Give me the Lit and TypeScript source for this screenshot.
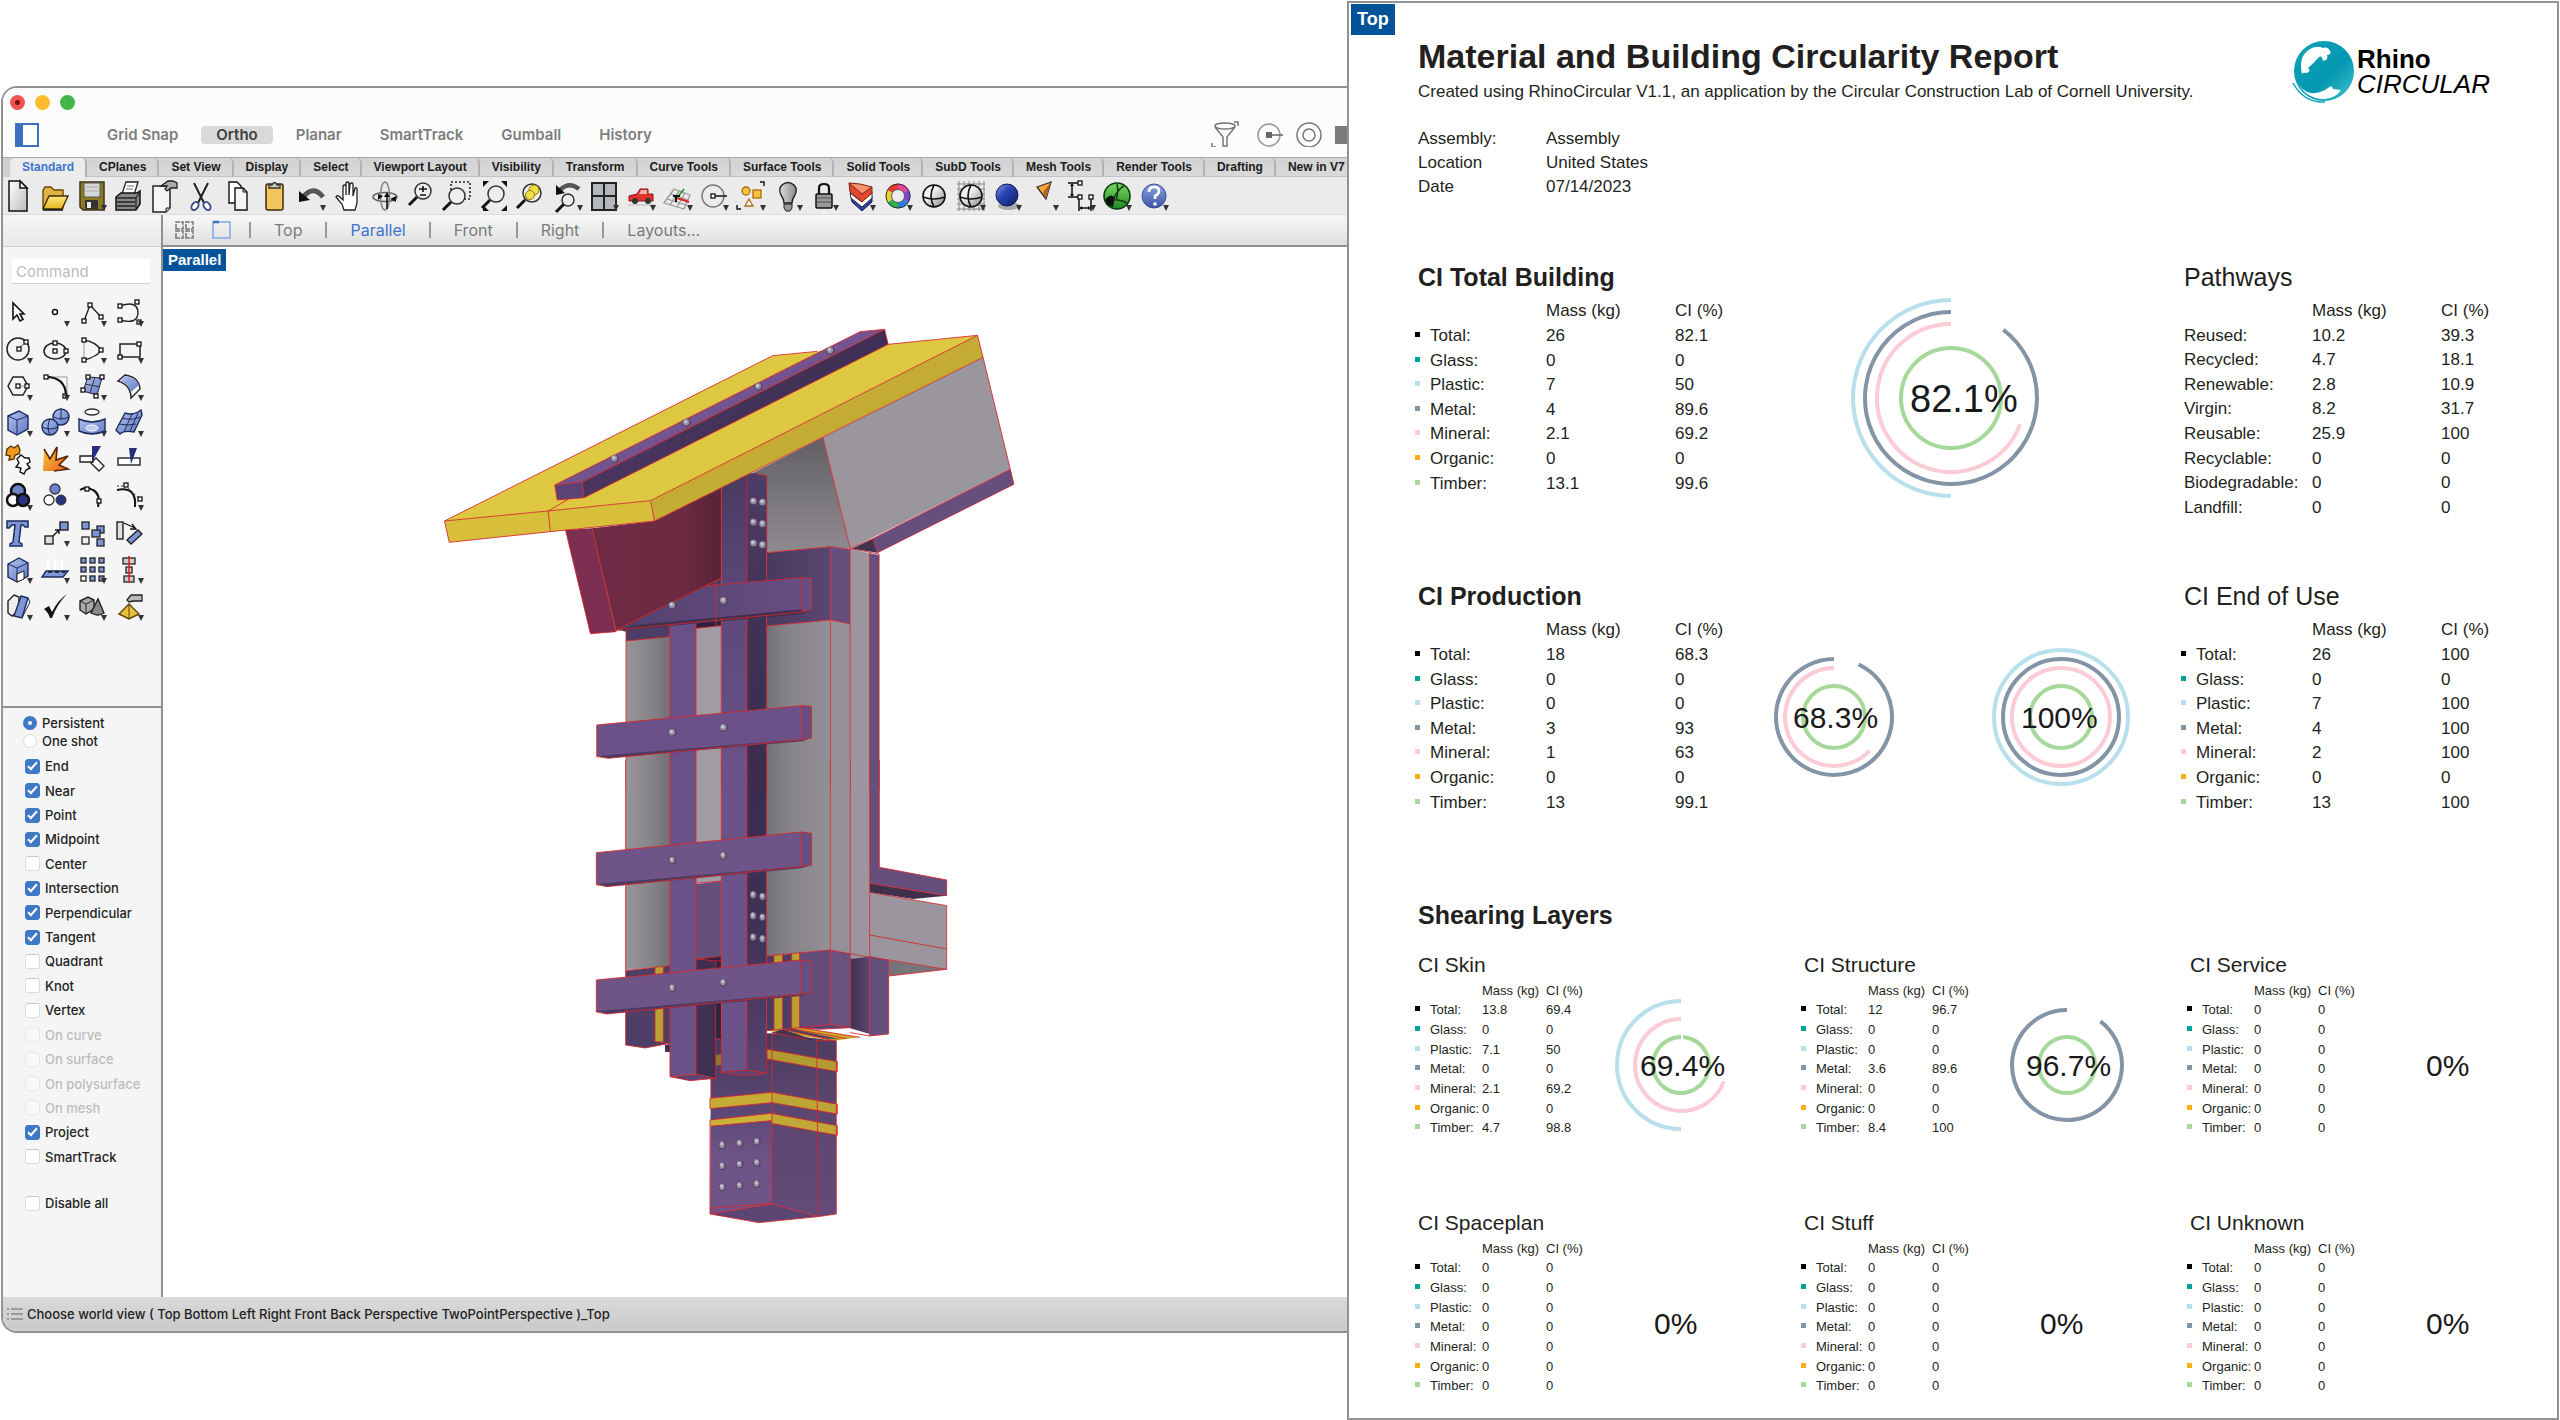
import { LitElement, html, svg, css, nothing } from "lit";
import { customElement, property, state } from "lit/decorators.js";
import { classMap } from "lit/directives/class-map.js";

type Frag = unknown;
interface Tool { name: string; art: Frag; menu?: boolean; }

const SANS = css`"Liberation Sans", Arial, sans-serif`;

/* Small square handle used by the curve icons. */
const dot = (x: number, y: number) =>
  svg`<rect x=${x - 2} y=${y - 2} width="4" height="4" fill="#fff" stroke="#111" stroke-width="1.3"/>`;
const lens = (cx: number, cy: number, r: number) => svg`
  <path d="M${cx - r + 2} ${cy + r - 2}L${cx - r - 6} ${cy + r + 6}" stroke="#111" stroke-width="3"/>
  <circle cx=${cx} cy=${cy} r=${r} fill="#eee" stroke="#333" stroke-width="1.5"/>`;

const TOP_TOOLS: Tool[] = [
  { name: "New", art: svg`<path d="M9 3H20L27 10V33H9Z" fill="url(#paper)" stroke="#111" stroke-width="1.5"/><path d="M20 3V10H27Z" fill="#fff" stroke="#111" stroke-width="1.5"/>` },
  { name: "Open", art: svg`<path d="M6 30V12L8 9H14L17 12H26V30Z" fill="#e0b440" stroke="#6b4a08" stroke-width="1.4"/><path d="M6 31L12 18H31L25 31Z" fill="url(#gold)" stroke="#3d2c08" stroke-width="1.4"/><path d="M6 32H26" stroke="#111" stroke-width="1.4"/>` },
  { name: "Save", menu: true, art: svg`<path d="M6 4H30V32H9L6 29Z" fill="#8a7a26" stroke="#3a3510" stroke-width="1.5"/><rect x="10" y="5" width="16" height="14" fill="#d6d6d6" stroke="#555"/><path d="M12 9H24M12 13H24" stroke="#aaa"/><rect x="11" y="22" width="13" height="9" fill="#333"/><rect x="13" y="24" width="4" height="6" fill="#e8e8e8"/>` },
  { name: "Print", art: svg`<path d="M12 16L16 4H28L24 17Z" fill="#fff" stroke="#222" stroke-width="1.3"/><path d="M17 8H24M16 11H23" stroke="#777"/><path d="M6 19L11 15H27L30 13V26L26 32H6Z" fill="#888" stroke="#111" stroke-width="1.5"/><path d="M6 20H26V32M26 20L30 14M7 24H25M7 28H25" stroke="#222" stroke-width="1.3" fill="none"/>` },
  { name: "Document properties", art: svg`<path d="M6 8H23V30L19 34H6Z" fill="#f5f5f5" stroke="#222" stroke-width="1.5"/><path d="M14 8L21 3H26L30 5V10H24L20 13L18 11L20 8Z" fill="#aaa" stroke="#222" stroke-width="1.3"/><path d="M23 30H19V34" fill="#bbb" stroke="#222"/>` },
  { name: "Cut", art: svg`<path d="M11 5L21 25M25 5L15 25" stroke="#222" stroke-width="2"/><ellipse cx="12" cy="28" rx="3" ry="4.500" transform="rotate(35 12 28)" fill="#fff" stroke="#3c4f8c" stroke-width="2"/><ellipse cx="24" cy="28" rx="3" ry="4.500" transform="rotate(-35 24 28)" fill="#fff" stroke="#3c4f8c" stroke-width="2"/>` },
  { name: "Copy", art: svg`<path d="M9 4H17L21 8V25H9Z" fill="#fff" stroke="#111" stroke-width="1.4"/><path d="M15 10H23L27 14V32H15Z" fill="#f4f4f4" stroke="#111" stroke-width="1.4"/><path d="M23 10V14H27" fill="none" stroke="#111"/>` },
  { name: "Paste", art: svg`<rect x="9" y="6" width="17" height="26" rx="2" fill="#f2c65c" stroke="#3a2a08" stroke-width="1.5"/><path d="M12 10V7H15Q17.500 2 20 7H23V10Z" fill="#ccc" stroke="#333" stroke-width="1.3"/>` },
  { name: "Undo", menu: true, art: svg`<path d="M11 18Q21 7 30 19" fill="none" stroke="#555" stroke-width="5"/><path d="M6 13V24L17 22Z" fill="#111"/>` },
  { name: "Pan", art: svg`<path d="M14 32L12 26L6 19Q7 16 11 20L13 22V8Q14.500 6 16 8V17V5Q17.500 3 19 5V17L20 6Q22 4 23 6V18L25 10Q27 9 27 11V25L25 32Z" fill="#fff" stroke="#222" stroke-width="1.3"/>` },
  { name: "Rotate view", art: svg`<ellipse cx="18" cy="19" rx="12" ry="4.500" fill="none" stroke="#666" stroke-width="1.6"/><ellipse cx="18" cy="18" rx="4.500" ry="14" fill="none" stroke="#888" stroke-width="1.6"/><path d="M20 14L23 19H17ZM11 16L16 18L11 22Z M23 21L29 18V24Z" fill="#111"/><path d="M20 18V31" stroke="#111" stroke-width="1.6"/>` },
  { name: "Zoom dynamic", art: svg`${lens(20, 13, 8)}<path d="M16 11H24M20 8V14M17 17H23" stroke="#111" stroke-width="1.6"/>` },
  { name: "Zoom window", art: svg`<rect x="11" y="4" width="19" height="17" fill="none" stroke="#222" stroke-width="1.6" stroke-dasharray="2 2"/>${lens(17, 18, 8)}` },
  { name: "Zoom extents", art: svg`${lens(19, 16, 8)}<path d="M6 3H12L6 9ZM30 3V9L24 3ZM30 33H24L30 27ZM6 33V27L12 33Z" fill="#111"/>` },
  { name: "Zoom selected", art: svg`${lens(19, 15, 9)}<circle cx="21" cy="12" r="5" fill="#f4de45" stroke="#8a7a10"/><circle cx="17" cy="17" r="4.500" fill="#f4de45" stroke="#8a7a10"/>` },
  { name: "Undo view change", menu: true, art: svg`<path d="M10 12Q19 3 29 11" fill="none" stroke="#555" stroke-width="4.500"/><path d="M6 7V17L15 15Z" fill="#111"/>${lens(18, 22, 6)}` },
  { name: "Viewports", menu: true, art: svg`<rect x="6" y="5" width="24" height="27" fill="#b4b7bb" stroke="#222" stroke-width="2"/><path d="M18 5V32M6 18H30" stroke="#222" stroke-width="2"/>` },
  { name: "Move vehicle", menu: true, art: svg`<path d="M6 23V18L14 16L17 11H25V16H30V23Z" fill="#e0332c" stroke="#8c1512"/><path d="M18 12H24V16H16Z" fill="#fff" opacity=".6"/><circle cx="12" cy="23" r="3" fill="#333"/><circle cx="25" cy="23" r="3" fill="#333"/><path d="M5 27H31" stroke="#bbb"/>` },
  { name: "CPlane", menu: true, art: svg`<path d="M4 25L14 11L30 17L24 31ZM7 21L26 27M11 16L28 22M10 27L19 13M17 29L25 15" fill="none" stroke="#999" stroke-width="1.3"/><path d="M17 20L29 24" stroke="#d22" stroke-width="2"/><path d="M17 20L24 11" stroke="#2b9e3c" stroke-width="2"/><path d="M13 18H20M16 18V24" stroke="#111" stroke-width="2"/>` },
  { name: "Object snap", menu: true, art: svg`<circle cx="17" cy="18" r="11" fill="none" stroke="#777" stroke-width="1.4"/><path d="M17 18H31" stroke="#111" stroke-width="1.5"/>${dot(17, 18)}` },
  { name: "Select", menu: true, art: svg`<circle cx="13" cy="13" r="4" fill="#fbc23a" stroke="#b06b10" stroke-width="1.3"/><rect x="20" y="12" width="8" height="8" fill="#fbc23a" stroke="#b06b10" stroke-width="1.3"/><path d="M16 21L20 28H12Z" fill="#fff" stroke="#b06b10" stroke-width="1.3"/><path d="M27 4H31V8M4 27V31H8" fill="none" stroke="#111" stroke-width="1.4"/>` },
  { name: "Hide", menu: true, art: svg`<path d="M14 25Q14 21 11 17Q8 11 12 7Q18 2 24 7Q28 11 25 17Q22 21 22 25Z" fill="url(#bulb)" stroke="#222" stroke-width="1.4"/><path d="M14 26H22V30L20 33H16L14 30Z" fill="#999" stroke="#222"/>` },
  { name: "Lock", menu: true, art: svg`<path d="M13 17V10Q13 6 18 6Q23 6 23 10V17" fill="none" stroke="#111" stroke-width="2.200"/><rect x="10" y="16" width="16" height="14" rx="1" fill="#999" stroke="#111" stroke-width="1.5"/><path d="M11 20H25M11 24H25" stroke="#555"/>` },
  { name: "Layers", menu: true, art: svg`<path d="M8 20L9 24L19 33L29 24V19L19 28Z" fill="#2b3f9c" stroke="#15205c"/><path d="M7 15L8 20L19 29L29 20V14L19 24Z" fill="#fff" stroke="#333"/><path d="M6 5L7 14L19 24L29 15V9L19 15Z" fill="#e3472e" stroke="#7c1f12"/><path d="M6 5L17 6L29 9L19 16Z" fill="#f4946e" stroke="#7c1f12"/>` },
  { name: "Object colors", menu: true, art: svg`<g fill="none" stroke-width="6"><path d="M18 8.500A9.500 9.500 0 0 1 26.200 13.200" stroke="#e9409c"/><path d="M26.200 13.200A9.500 9.500 0 0 1 26.200 22.800" stroke="#7a45d8"/><path d="M26.200 22.800A9.500 9.500 0 0 1 18 27.500" stroke="#2f7be0"/><path d="M18 27.500A9.500 9.500 0 0 1 9.800 22.800" stroke="#2fb14a"/><path d="M9.800 22.800A9.500 9.500 0 0 1 9.800 13.200" stroke="#e8d530"/><path d="M9.800 13.200A9.500 9.500 0 0 1 18 8.500" stroke="#e8392f"/></g><circle cx="18" cy="18" r="12" fill="none" stroke="#333"/><circle cx="18" cy="18" r="6.500" fill="#eee" stroke="#555"/>` },
  { name: "Wireframe", art: svg`<circle cx="18" cy="18" r="11" fill="url(#ball)" stroke="#111" stroke-width="1.6"/><path d="M7 19Q18 23 29 19M18 7Q12 18 18 29" fill="none" stroke="#111" stroke-width="1.6"/>` },
  { name: "Shaded", menu: true, art: svg`<path d="M4 6H32M4 11H32M4 16H32M4 21H32M4 26H32M4 31H32M6 3V33M11 3V33M16 3V33M21 3V33M26 3V33M31 3V33" stroke="#888" stroke-width="1"/><circle cx="18" cy="18" r="11" fill="url(#ball)" stroke="#111" stroke-width="1.6"/><path d="M7 19Q18 23 29 19M18 7Q12 18 18 29" fill="none" stroke="#111" stroke-width="1.6"/>` },
  { name: "Rendered", menu: true, art: svg`<ellipse cx="20" cy="28" rx="11" ry="4" fill="#aaa"/><circle cx="18" cy="17" r="11" fill="url(#blueball)" stroke="#111a4c"/>` },
  { name: "Spotlight", menu: true, art: svg`<path d="M11 9L25 4L20 21Z" fill="#f3a73c" stroke="#333" stroke-width="1.3"/><path d="M25 4L20 21L17 14Z" fill="#b5651a"/>` },
  { name: "Dimensions", menu: true, art: svg`<path d="M5 5H16M5 19H16M9 6V18M16 19V33M28 19V33M17 30H27" stroke="#111" stroke-width="1.5"/><path d="M7 8L9 5L11 8ZM7 16L9 19L11 16ZM19 28L16 30L19 32ZM25 28L28 30L25 32Z" fill="#111"/>${dot(17, 5)}${dot(17, 19)}${dot(28, 19)}` },
  { name: "Grasshopper", menu: true, art: svg`<circle cx="18" cy="18" r="13" fill="url(#green)" stroke="#0c3c10" stroke-width="1.6"/><path d="M6 22Q12 14 16 20L14 29L9 27Z" fill="#111"/><path d="M15 20Q20 10 25 8M18 6Q20 14 17 22Q24 22 29 26" fill="none" stroke="#123c12" stroke-width="1.5"/>` },
  { name: "Help", menu: true, art: svg`<circle cx="18" cy="18" r="12" fill="url(#help)" stroke="#3b4f96"/><path d="M13 14Q13 9 18 9Q23 9 23 13Q23 16 19 18V21" fill="none" stroke="#fff" stroke-width="2.600"/><circle cx="19" cy="26" r="1.800" fill="#fff"/>` },
];

const SIDE_TOOLS: Tool[] = [
  { name: "Pointer", art: svg`<path d="M13 9V25L17 21L20 27L23 25.500L20 20H24Z" fill="#fff" stroke="#111" stroke-width="1.6"/>` },
  { name: "Point", menu: true, art: svg`<circle cx="18" cy="18" r="2.500" fill="#fff" stroke="#111" stroke-width="1.4"/>` },
  { name: "Polyline", menu: true, art: svg`<path d="M10 27L16 11L27 23" fill="none" stroke="#222" stroke-width="1.4"/>${dot(10, 27)}${dot(16, 11)}${dot(27, 23)}` },
  { name: "Curve", menu: true, art: svg`<path d="M9 12Q26 6 27 18Q27 31 9 26" fill="none" stroke="#222" stroke-width="1.4"/>${dot(9, 12)}${dot(26, 8)}${dot(9, 26)}${dot(28, 28)}` },
  { name: "Circle", menu: true, art: svg`<circle cx="18" cy="18" r="11" fill="none" stroke="#222" stroke-width="1.5"/><path d="M18 18L26 11" stroke="#555"/>${dot(19, 18)}${dot(26, 11)}` },
  { name: "Ellipse", menu: true, art: svg`<ellipse cx="18" cy="20" rx="11" ry="8" fill="none" stroke="#222" stroke-width="1.5"/>${dot(18, 12)}${dot(18, 20)}${dot(29, 20)}` },
  { name: "Arc", menu: true, art: svg`<path d="M10 9Q22 11 27 19Q23 26 10 29" fill="none" stroke="#222" stroke-width="1.5"/><path d="M10 9V29" stroke="#999"/>${dot(10, 9)}${dot(27, 19)}${dot(10, 29)}` },
  { name: "Rectangle", menu: true, art: svg`<rect x="9" y="13" width="20" height="13" fill="none" stroke="#222" stroke-width="1.5"/>${dot(9, 26)}${dot(28, 13)}` },
  { name: "Polygon", menu: true, art: svg`<path d="M8 18L13 9H23L28 18L23 27H13Z" fill="none" stroke="#222" stroke-width="1.5"/><path d="M19 18H27" stroke="#999"/>${dot(18, 18)}${dot(27, 18)}` },
  { name: "Fillet", menu: true, art: svg`<path d="M9 9H30V28" fill="none" stroke="#999"/><path d="M9 9Q28 9 29 27" fill="none" stroke="#111" stroke-width="2.200"/>${dot(9, 9)}${dot(28, 28)}` },
  { name: "Surface from points", menu: true, art: svg`<path d="M14 9L28 10L23 27L9 23Z" fill="url(#steel)" stroke="#223"/><path d="M21 9L16 25M11 16L26 19" stroke="#334" />${dot(14, 9)}${dot(28, 9)}${dot(9, 22)}${dot(22, 28)}` },
  { name: "Surface from curves", menu: true, art: svg`<path d="M7 13L14 7Q28 9 29 21L20 30Q20 17 7 13Z" fill="#fff" stroke="#222" stroke-width="1.4"/><path d="M14 8Q24 9 28 17L20 24Q17 16 9 13Z" fill="url(#steel)"/>` },
  { name: "Box", menu: true, art: svg`<path d="M8 12L19 7L28 12V25L17 31L8 26Z" fill="url(#steel)" stroke="#1c2b5c" stroke-width="1.4"/><path d="M8 12L17 16L28 12M17 16V31" fill="none" stroke="#1c2b5c"/>` },
  { name: "Boolean spheres", menu: true, art: svg`<circle cx="24" cy="13" r="8" fill="url(#steel)" stroke="#1c2b5c" stroke-width="1.4"/><circle cx="13" cy="23" r="8" fill="url(#steel)" stroke="#1c2b5c" stroke-width="1.4"/><path d="M5 23Q13 27 21 23M13 15Q9 23 13 31M17 13Q24 17 32 13M24 5V16" fill="none" stroke="#1c2b5c"/>` },
  { name: "Loft", menu: true, art: svg`<ellipse cx="18" cy="8" rx="7" ry="3" fill="#fff" stroke="#333" stroke-width="1.4"/><path d="M5 15Q18 21 31 15V27Q18 33 5 27Z" fill="url(#steel)" stroke="#1c2b5c" stroke-width="1.4"/><ellipse cx="18" cy="24" rx="6" ry="3" fill="#c3cdf0" stroke="#fff"/>` },
  { name: "Mesh surface", menu: true, art: svg`<path d="M5 26L14 9Q22 12 30 6L31 11L23 28Q13 26 9 30Z" fill="url(#steel)" stroke="#1c2b5c" stroke-width="1.4"/><path d="M11 14Q20 17 29 13M8 20Q17 22 25 20M21 10L13 28M27 9L19 27" fill="none" stroke="#1c2b5c"/>` },
  { name: "Join", art: svg`<path d="M7 8L11 5L14 7L18 4L20 9L19 13L15 14L14 18L9 19L10 15L6 14Z" fill="#f09a20" stroke="#5a3606" stroke-width="1.4"/><path d="M17 18L21 14L25 17L29 17L30 21L27 23L30 27L26 29L24 33L20 31L21 27L16 26L19 22Z" fill="#fff" stroke="#111" stroke-width="1.4"/>` },
  { name: "Explode", art: svg`<path d="M6 30L7 8L13 17L21 6L20 18L31 15L22 24L31 27L16 30Z" fill="url(#fire)"/><path d="M7 8L13 18L20 6L19 19L31 15L22 24L31 28L17 30" fill="none" stroke="#5a2405" stroke-width="1.6"/>` },
  { name: "Trim", art: svg`<path d="M6 15H19V21H6ZM22 17L30 25L25 30L17 22Z" fill="#fff" stroke="#222" stroke-width="1.4"/><path d="M18 5H27L18 21Z" fill="#232f7a"/>` },
  { name: "Split", art: svg`<rect x="7" y="17" width="22" height="7" fill="#fff" stroke="#222" stroke-width="1.4"/><path d="M18 7H26L20 23Z" fill="#232f7a"/>` },
  { name: "Group", menu: true, art: svg`<circle cx="18" cy="13" r="7" fill="#6f83c8" stroke="#111" stroke-width="2.500"/><circle cx="13" cy="22" r="6" fill="#fff" stroke="#111" stroke-width="2.500"/><circle cx="23" cy="22" r="6" fill="#27337c" stroke="#111" stroke-width="2.500"/>` },
  { name: "Ungroup", art: svg`<circle cx="18" cy="11" r="5" fill="#6f83c8" stroke="#334" stroke-width="1.3"/><circle cx="12" cy="22" r="5" fill="#fff" stroke="#333" stroke-width="1.3"/><circle cx="24" cy="22" r="5" fill="#27337c" stroke="#334"/>` },
  { name: "Edit points", art: svg`<path d="M6 12Q12 8 19 12Q27 16 24 29" fill="none" stroke="#111" stroke-width="2"/>${dot(13, 11)}${dot(25, 23)}` },
  { name: "Control points", menu: true, art: svg`<path d="M6 12Q26 8 24 29" fill="none" stroke="#111" stroke-width="2"/><path d="M6 8H15L30 22" fill="none" stroke="#333" stroke-dasharray="2 2"/>${dot(15, 7)}${dot(29, 21)}` },
  { name: "Text", art: svg`<path d="M7 7H28V13H25L23 11H21L19 28L22 30V32H10V30L13 28L15 11H12L9 14H7Z" fill="#7d94d6" stroke="#1c2b5c" stroke-width="1.5"/>` },
  { name: "Move", menu: true, art: svg`<rect x="8" y="22" width="8" height="8" fill="#ddd" stroke="#222" stroke-width="1.4"/><rect x="23" y="8" width="8" height="8" fill="#7d94d6" stroke="#222" stroke-width="1.4"/><path d="M16 22L22 16M18 16H22V20" stroke="#111" stroke-width="1.4" fill="none"/>` },
  { name: "Copy objects", art: svg`<rect x="8" y="8" width="7" height="7" fill="#7d94d6" stroke="#222" stroke-width="1.3"/><rect x="8" y="23" width="7" height="7" fill="#eee" stroke="#222" stroke-width="1.3"/><rect x="23" y="12" width="7" height="7" fill="#7d94d6" stroke="#222" stroke-width="1.3"/><rect x="18" y="16" width="8" height="7" fill="#7d94d6" stroke="#222" stroke-width="1.3"/><rect x="23" y="25" width="7" height="7" fill="#7d94d6" stroke="#222" stroke-width="1.3"/>` },
  { name: "Rotate", art: svg`<rect x="6" y="8" width="6" height="17" fill="#ddd" stroke="#222" stroke-width="1.4"/><path d="M16 26L27 16L31 20L20 30Z" fill="#7d94d6" stroke="#222" stroke-width="1.4"/><path d="M13 9L24 14M21 10L25 15L19 15" fill="none" stroke="#111" stroke-width="1.3"/>` },
  { name: "Scale", menu: true, art: svg`<path d="M8 13L19 7L28 12V25L17 31L8 26Z" fill="url(#steel)" stroke="#1c2b5c" stroke-width="1.4"/><path d="M8 13L17 17L28 12M17 17V31" fill="none" stroke="#1c2b5c"/><path d="M17 23L24 20V28L17 31Z" fill="#fff" stroke="#222"/>` },
  { name: "Project to plane", menu: true, art: svg`<path d="M9 20H31L26 26H5Z" fill="#7d94d6" stroke="#1c2b5c" stroke-width="1.4"/><path d="M11 8V19M18 8V19M25 8V19" stroke="#fff" stroke-width="2"/><path d="M11 21H15M18 21H22M25 21H28" stroke="#111" stroke-width="1.6"/>` },
  { name: "Array", menu: true, art: svg`${[7, 16, 25].map((y) => [7, 16, 25].map((x) => svg`<rect x=${x} y=${y} width="5" height="5" fill=${x === 7 && y === 25 ? "#fff" : "#7d94d6"} stroke="#222" stroke-width="1.3"/>`))}` },
  { name: "Align", menu: true, art: svg`<rect x="12" y="7" width="12" height="6" fill="#ccc" stroke="#222" stroke-width="1.3"/><rect x="15" y="16" width="6" height="6" fill="#ccc" stroke="#222" stroke-width="1.3"/><rect x="13" y="25" width="10" height="6" fill="#ccc" stroke="#222" stroke-width="1.3"/><path d="M18 5V32" stroke="#e01f1f" stroke-width="1.5"/>` },
  { name: "Sheet bend", menu: true, art: svg`<path d="M8 13L14 7L19 9V22L12 28L8 25Z" fill="#eee" stroke="#222" stroke-width="1.4"/><path d="M21 8L28 10L22 30L14 28Z" fill="#7d94d6" stroke="#1c2b5c" stroke-width="1.4"/><path d="M28 10L30 14L22 30" fill="none" stroke="#1c2b5c"/>` },
  { name: "Check", menu: true, art: svg`<path d="M7 21L12 18L15 24Q21 12 30 6Q20 16 15 30H13Q11 24 7 21Z" fill="#111"/>` },
  { name: "Solids", menu: true, art: svg`<path d="M6 13L14 9L20 12V21L12 26L6 22Z" fill="#aaa" stroke="#222" stroke-width="1.4"/><path d="M6 13L12 16L20 12M12 16V26" fill="none" stroke="#222"/><path d="M24 11L30 25Q24 29 17 25Z" fill="#888" stroke="#222" stroke-width="1.4"/>` },
  { name: "Pyramid", menu: true, art: svg`<path d="M18 16L28 26L18 31L8 26Z" fill="#e8c03c" stroke="#5a4408" stroke-width="1.4"/><path d="M18 16V31" stroke="#5a4408"/><path d="M16 12L20 7H31V13H22L18 14Z" fill="#bbb" stroke="#222" stroke-width="1.3"/>` },
];

const TABS = ["Standard", "CPlanes", "Set View", "Display", "Select", "Viewport Layout", "Visibility", "Transform", "Curve Tools", "Surface Tools", "Solid Tools", "SubD Tools", "Mesh Tools", "Render Tools", "Drafting", "New in V7"];
const MODES = ["Grid Snap", "Ortho", "Planar", "SmartTrack", "Gumball", "History"];
const VIEWS = ["Top", "Parallel", "Front", "Right", "Layouts..."];
const SNAPS: [string, boolean, boolean?][] = [
  ["End", true], ["Near", true], ["Point", true], ["Midpoint", true], ["Center", false],
  ["Intersection", true], ["Perpendicular", true], ["Tangent", true], ["Quadrant", false],
  ["Knot", false], ["Vertex", false], ["On curve", false, true], ["On surface", false, true],
  ["On polysurface", false, true], ["On mesh", false, true], ["Project", true], ["SmartTrack", false],
];

type Shape = [fill: string, points: string];
const face = ([fill, points]: Shape) => svg`<polygon points=${points} fill=${fill}/>`;
const edge = (points: string) => svg`<polyline points=${points}/>`;
const screw = ([x, y]: number[]) => svg`<ellipse cx=${x} cy=${y} rx="11" ry="12" fill="#54405f"/><ellipse cx=${x - 1} cy=${y - 1} rx="8" ry="10" fill="#948ca4"/><ellipse cx=${x - 2} cy=${y - 3} rx="4" ry="5" fill="#c9c6d8"/>`;

/* Upper half of the assembly: roof, chimney box and the first two battens. */
const UPPER: Shape[] = [
  ["url(#shadeUp)", "840,490 1019,382 1088,716 1038,710 877,728"],
  ["#9b969d", "1019,382 1424,142 1493,478 1088,716"],
  ["#664f7c", "1145,686 1493,478 1502,523 1157,728"],
  ["#43334f", "1092,716 1145,686 1157,728"],
  ["#3c2d4e", "500,958 700,925 762,910 762,960 521,965"],
  ["url(#wallL)", "521,962 632,950 632,1440 521,1440"],
  ["#4e3d66", "521,955 632,940 632,980 521,993"],
  ["#a19ba3", "698,950 762,945 762,1440 698,1440"],
  ["#2f213c", "698,935 762,925 762,947 698,955"],
  ["url(#wallR)", "877,948 1038,930 1038,1440 877,1440"],
  ["url(#recess)", "877,728 1038,710 1038,930 877,948"],
  ["#664f7c", "1038,710 1088,718 1088,942 1038,930"],
  ["#959097", "1038,930 1088,942 1088,1440 1038,1440"],
  ["#9b969d", "1088,716 1137,730 1137,1440 1088,1440"],
  ["#664f7c", "1137,730 1161,735 1161,1440 1137,1440"],
  ["url(#post)", "762,533 827,490 827,1440 762,1440"],
  ["url(#postSide)", "827,490 850,490 877,497 877,1440 827,1440"],
  ["#6b5088", "632,935 698,930 698,1440 632,1440"],
  ["#4b3b61", "700,840 762,805 762,830 700,850"],
  ["url(#bar)", "496,960 720,828 965,803 990,806 990,900 966,906 540,950"],
  ["#3f3050", "496,962 540,946 966,898 990,900 966,912 520,960"],
  ["#664f80", "965,803 990,806 990,900 966,906"],
  ["#7c2f50", "368,660 435,655 496,965 431,971"],
  ["url(#wine)", "435,655 593,633 762,533 762,805 496,962"],
  ["#6c5188", "447,1245 965,1187 966,1289 476,1338 447,1340"],
  ["#664f80", "965,1187 990,1189 990,1284 966,1289"],
  ["#4c3a62", "447,1338 966,1288 990,1284 966,1294 476,1345"],
  ["#dec741", "62,633 892,137 1010,124 1410,76 583,572 324,603"],
  ["#d7be3b", "62,633 324,603 583,572 593,633 330,665 74,697"],
  ["#c3ab34", "583,572 1410,76 1424,142 593,633"],
  ["#73548f", "341,525 1113,65 1175,58 410,516"],
  ["#5b4376", "341,525 410,516 415,563 347,570"],
  ["url(#beam)", "410,516 1175,58 1184,103 415,563"],
];
const UPPER_EDGES = [
  "62,633 892,137 1005,124", "1184,103 1410,76 1424,142 593,633 330,665 74,697 62,633 324,603 583,572 1410,76",
  "583,572 593,633", "324,603 330,665", "324,603 375,568",
  "341,525 1113,65 1175,58 1184,103 415,563 347,570 341,525 410,516 1175,58", "410,516 415,563",
  "368,660 431,971 496,965 435,655", "496,960 720,828 762,805", "762,533 762,815", "827,495 827,815", "850,492 877,497 877,812",
  "1019,382 1088,716", "1424,142 1493,478 1502,523 1157,728 1145,686 1493,478", "1088,716 1145,686", "1088,716 1161,732 1161,1440",
  "877,728 1038,710 1088,718 1088,1440", "877,948 1038,930 1088,942", "1038,710 1038,1440", "1137,728 1137,1440",
  "720,828 965,803 990,806 990,900 966,906 496,960", "965,803 966,906",
  "521,960 521,1240", "521,993 632,980", "632,940 632,1224", "698,936 698,1216", "748,812 748,948", "762,925 762,1208", "827,920 827,1200", "877,915 877,1195", "698,955 762,947",
  "447,1340 447,1245 965,1187 990,1189 990,1284 966,1289 476,1345 447,1340", "965,1187 966,1289",
  "521,1340 521,1440", "632,1326 632,1440", "698,1318 698,1440", "762,1310 762,1440", "827,1305 827,1440", "877,1300 877,1440",
];
const UPPER_SCREWS = [[492, 446], [674, 338], [856, 230], [1038, 122], [844, 574], [867, 577], [844, 637], [867, 642], [844, 700], [867, 705], [638, 886], [768, 872], [638, 1268], [768, 1253]];

/* Lower half: remaining battens, skirt blocks and the banded foot. */
const LOWER: Shape[] = [
  ["#77747a", "985,600 1160,628 987,648"],
  ["#9b969d", "929,397 1160,437 1160,628 929,592"],
  ["#3f304c", "929,370 1160,407 1060,417 929,397"],
  ["#664f7c", "929,318 958,322 1160,360 1160,407 929,370"],
  ["url(#footL)", "453,830 636,820 636,1332 450,1362"],
  ["url(#footR)", "636,820 829,842 829,1362 775,1370 636,1332"],
  ["#5b4573", "450,1362 636,1332 775,1370 596,1388"],
  ["#c5ac36", "450,1015 636,997 636,1028 450,1046"],
  ["#bda535", "636,997 832,1033 832,1062 636,1028"],
  ["#cbb33a", "450,1080 633,1060 633,1082 450,1099"],
  ["#c0a737", "633,1060 832,1097 832,1126 633,1090"],
  ["#b39b33", "622,868 832,905 832,935 622,897"],
  ["#8d7a2c", "467,885 484,882 484,915 467,917"],
  ["#4f3e65", "197,632 330,617 330,850 255,864 197,855"],
  ["#b9a133", "285,621 310,618 310,845 285,845"],
  ["#3f3050", "315,855 332,852 332,877 315,875"],
  ["#c9a82e", "622,812 721,803 900,832 820,842"],
  ["#43334f", "636,818 668,808 770,842 740,838"],
  ["#51405f", "668,808 695,806 840,838 800,836"],
  ["url(#recess)", "620,588 811,570 811,793 721,803 620,812"],
  ["#634c79", "720,578 811,570 811,793 721,803"],
  ["#6a517f", "811,570 871,580 871,803 811,793"],
  ["#5c4574", "721,803 811,793 871,803 775,808"],
  ["#b9a133", "642,583 668,581 668,808 642,811"],
  ["#b9a133", "695,578 719,575 719,802 695,805"],
  ["url(#gapShade)", "871,590 929,590 929,822 871,805"],
  ["#664f7c", "929,588 986,600 986,822 929,828"],
  ["url(#wallL)", "197,0 330,0 330,617 197,630"],
  ["#a19ba3", "408,0 484,0 484,363 408,370"],
  ["#65507c", "408,372 484,363 484,590 408,597"],
  ["#2f2340", "408,597 484,588 484,835 408,840"],
  ["url(#wallR)", "620,0 811,0 811,570 620,588"],
  ["#959097", "811,0 871,0 871,580 811,570"],
  ["#9b969d", "871,0 929,0 929,590 871,597"],
  ["#664f7c", "929,0 958,0 958,322 929,320"],
  ["#3f2f50", "408,600 467,603 467,955 408,943"],
  ["#6b5288", "330,0 408,0 408,943 330,950"],
  ["#5a4474", "330,950 408,943 467,955 390,962"],
  ["#6b5288", "484,0 561,0 561,930 484,937"],
  ["url(#postSide2)", "561,0 620,0 620,940 561,930"],
  ["#5a4474", "484,937 561,930 620,940 553,947"],
  ["#6f5487", "109,278 724,216 724,320 140,374 109,374"],
  ["#664f80", "724,216 755,220 755,315 724,320"],
  ["#4c3a62", "109,372 724,319 755,315 724,325 140,380"],
  ["#6f5487", "109,660 724,600 724,702 140,756 109,756"],
  ["#664f80", "724,600 755,603 755,698 724,702"],
  ["#4c3a62", "109,754 724,701 755,698 724,708 140,762"],
];
const LOWER_EDGES = [
  "958,0 958,322 1160,360 1160,407 929,370", "929,0 929,828", "929,397 1160,437 1160,628 987,648", "929,525 1160,567", "1160,628 986,600",
  "109,374 109,278 724,216 755,220 755,315 724,320 140,380 109,374", "724,216 724,320",
  "109,756 109,660 724,600 755,603 755,698 724,702 140,762 109,756", "724,600 724,702",
  "197,0 197,270", "197,370 197,650", "197,632 330,617", "197,750 197,855 255,864 330,850", "330,0 330,255", "330,358 330,638", "330,740 330,950 390,962 467,955 467,738", "408,0 408,247", "408,350 408,630", "408,733 408,943 330,950", "408,943 467,955",
  "484,0 484,240", "484,343 484,622", "484,726 484,937 553,947 620,940 561,930 484,937", "561,0 561,232", "561,335 561,615", "561,718 561,930", "620,0 620,226", "620,330 620,610", "620,712 620,940",
  "408,370 484,363", "408,597 484,590", "408,597 467,603 484,602", "467,603 467,625", "467,835 484,838", "811,0 811,793 871,803 871,0", "620,588 811,570 929,592 986,600 986,822 929,828 871,818", "620,812 721,803 811,793", "721,803 775,808 871,803",
  "642,583 642,605", "668,581 668,605", "695,578 695,603", "719,575 719,600", "642,708 642,811", "668,706 668,808", "695,704 695,805", "719,702 719,802",
  "285,621 285,645", "310,618 310,642", "285,745 285,845 328,850", "310,742 310,843",
  "636,818 740,838", "668,808 820,842", "695,806 860,836", "719,803 900,832", "770,842 829,842 829,1362 775,1370 596,1388 450,1362 636,1332 775,1370 770,842", "450,1362 450,1100", "453,955 453,1015", "636,820 636,1332",
  "450,1345 636,1330", "450,1046 450,1015 636,997 832,1033 832,1062 636,1028 450,1046", "450,1099 450,1080 633,1060 832,1097 832,1126 633,1090 633,1082 450,1099", "622,868 832,905 832,935 622,897",
];
const LOWER_SCREWS = [[337, 301], [490, 287], [337, 684], [490, 668], [580, 405], [608, 410], [580, 468], [608, 472], [580, 532], [608, 537],
  [487, 1155], [539, 1150], [591, 1145], [487, 1218], [539, 1213], [591, 1208], [487, 1282], [539, 1277], [591, 1272]];

@customElement("rhino-window")
class RhinoWindow extends LitElement {
  @state() private mode = "Ortho";
  @state() private tab = "Standard";
  @state() private view = "Parallel";

  static styles = css`
    :host { display: flex; flex-direction: column; box-sizing: border-box; border: 2px solid #929292; border-right: 0; border-radius: 16px 0 0 16px; overflow: hidden; background: #fff; color: #222; font-family: Inter, sans-serif; min-width: 0; }
    button, input { font: inherit; }
    button { border: 0; background: none; padding: 0; margin: 0; color: inherit; }
    .defs { position: absolute; width: 0; height: 0; }
    .title { background: #fcfcfc; height: 69px; flex: none; }
    .lights { display: flex; gap: 10px; padding: 7px 7px 0; height: 16px; }
    .light { width: 15px; height: 15px; border-radius: 50%; }
    .red { background: radial-gradient(circle, #7c1210 0 2px, #f0544c 3px); }
    .amber { background: #fdbb2d; }
    .green { background: #43b649; }
    .modes { display: flex; align-items: center; height: 24px; padding: 12px 0 0 12px; overflow: hidden; }
    .panel { display: block; width: 24px; height: 24px; }
    .mode-list { display: flex; gap: 8px; margin-left: 53px; flex: 1; }
    .mode { font-weight: 600; font-size: 15px; line-height: 18px; color: #7d7d7d; padding: 0 15px; border-radius: 4px; white-space: nowrap; }
    .mode.on { background: #d9d9d9; color: #3f3f3f; }
    .filters { display: flex; align-items: center; gap: 12px; flex: none; }
    .filters svg { display: block; width: 28px; height: 28px; }
    .filters svg:first-child { margin-right: 4px; }
    .filters .block { width: 12px; height: 18px; background: #7b7b7b; }
    .tabs { display: flex; height: 20px; flex: none; background: #cfcfcf; padding-left: 7px; box-sizing: border-box; border-top: 1px solid #a9a9a9; overflow: hidden; }
    .tab { font: bold 12px/16px ${SANS}; color: #1c1c1c; padding: 0 11px 2px 12px; background: linear-gradient(#d2d2d2, #dadada); border-right: 2px solid #b3b3b3; border-radius: 0 5px 0 0; white-space: nowrap; box-shadow: inset 0 -1px #c2c2c2; flex: none; }
    .tab.on { background: #ececec; color: #3f73cc; border-radius: 5px 5px 0 0; box-shadow: none; }
    .bar { display: grid; grid-template-columns: repeat(32, 1fr); background: #ebebeb; height: 38px; flex: none; margin-left: -3px; padding-right: 13%; align-items: center; justify-items: center; border-bottom: 1px solid #dcdcdc; box-sizing: border-box; }
    .tool { display: block; width: 36px; height: 36px; }
    .tool svg { display: block; width: 36px; height: 36px; overflow: visible; }
    .body { flex: 1; display: grid; grid-template-columns: 160px 1fr; min-height: 0; }
    .side { background: #f5f5f5; border-right: 2px solid #909090; display: flex; flex-direction: column; min-width: 0; }
    .side-top { height: 32px; background: linear-gradient(#f6f6f6, #e8e8e8); border-bottom: 1px solid #ccc; box-sizing: border-box; flex: none; }
    .command { margin: 12px 11px 0 9px; padding: 0 4px; height: 25px; border: 0; border-bottom: 1px solid #d0d0d0; background: #fff; font-size: 15px; box-sizing: border-box; min-width: 0; border-radius: 0; }
    .command::placeholder { color: #bcbcbc; opacity: 1; }
    .palette { display: grid; grid-template-columns: repeat(4, 1fr); grid-auto-rows: 1fr; min-height: 330px; margin: 10px 0 0 -3px; padding-right: 14px; justify-items: center; align-items: center; }
    .snaps { margin-top: 82px; border-top: 2px solid #909090; flex: 1; padding: 6px 0 0 20px; font-size: 13px; font-weight: 500; color: #222; white-space: nowrap; }
    .row { display: flex; align-items: center; gap: 5px; line-height: 18px; }
    .radio { appearance: none; width: 14px; height: 14px; margin: 0; border-radius: 50%; background: #fff; border: 1px solid #ddd; }
    .radio:checked { background: #fff; border: 5px solid #3f78c4; }
    .list { display: grid; grid-auto-rows: 1fr; min-height: 415px; padding-left: 2px; margin-top: 4px; align-items: center; }
    .last { padding: 25px 0 0 2px; }
    .check { appearance: none; width: 15px; height: 15px; margin: 0; border-radius: 3px; background: #fff; border: 1px solid #dcdcdc; border-top-color: #c8c8c8; display: grid; place-items: center; flex: none; }
    .check:checked { background: #3f78c4; border-color: #3f78c4; }
    .check:checked::before { content: ""; width: 3px; height: 8px; border: solid #fff; border-width: 0 2px 2px 0; transform: rotate(42deg); margin-top: -3px; }
    .check:disabled { background: #f8f8f8; border-color: #e8e8e8; }
    .off { color: #bcbcbc; }
    .main { display: flex; flex-direction: column; min-width: 0; }
    .views { display: flex; align-items: center; height: 32px; flex: none; background: linear-gradient(#f8f8f8, #dfdfdf); border-bottom: 2px solid #909090; box-sizing: border-box; padding-left: 12px; }
    .views svg { width: 20px; height: 20px; display: block; margin-right: 17px; }
    .view { font-size: 16px; line-height: 16px; color: #7a7a7a; padding: 0 23px; border-left: 2px solid #999; }
    .view.on { color: #3f73cc; }
    .canvas { flex: 1; position: relative; background: #fff; min-height: 0; overflow: hidden; }
    .badge { position: absolute; left: 0; top: 2px; background: #02539a; color: #fff; font: bold 15px/22px ${SANS}; padding: 0 5px; }
    .scene { display: block; width: 100%; height: auto; }
    .edges polyline { fill: none; stroke: #d8262c; stroke-width: 1; vector-effect: non-scaling-stroke; opacity: .85; }
    .status { display: flex; align-items: center; gap: 4px; height: 34px; flex: none; background: linear-gradient(#dadada, #cacaca); font-size: 13px; font-weight: 500; padding-left: 4px; }
    .status svg { width: 16px; height: 16px; display: block; }
  `;

  private tool(t: Tool) {
    return html`<button class="tool" aria-label=${t.name}>
      <svg viewBox="0 0 36 36">${t.art}${t.menu ? svg`<path d="M27 27H33L30 33Z" fill="#333"/>` : nothing}</svg>
    </button>`;
  }

  private grad(id: string, stops: [number, string][], dir = "v") {
    const end = dir === "v" ? [0, 1] : dir === "h" ? [1, 0] : [1, 1];
    return svg`<linearGradient id=${id} x1="0" y1="0" x2=${end[0]} y2=${end[1]}>${stops.map(([o, c]) => svg`<stop offset=${o} stop-color=${c}/>`)}</linearGradient>`;
  }

  private defs() {
    return html`<svg class="defs" aria-hidden="true"><defs>
      ${this.grad("paper", [[0, "#fff"], [1, "#bbb"]], "d")}
      ${this.grad("gold", [[0, "#ffe680"], [1, "#e8b820"]])}
      ${this.grad("bulb", [[0, "#ddd"], [1, "#888"]], "h")}
      ${this.grad("ball", [[0, "#fff"], [0.4, "#eee"], [1, "#888"]], "d")}
      ${this.grad("blueball", [[0, "#8fa8f0"], [0.4, "#2844b4"], [1, "#101c60"]], "d")}
      ${this.grad("green", [[0, "#7fd860"], [1, "#1c8a24"]])}
      ${this.grad("help", [[0, "#8ea4e0"], [1, "#3c54a8"]])}
      ${this.grad("steel", [[0, "#b4c2ee"], [1, "#5f78c4"]], "d")}
      ${this.grad("fire", [[0, "#f6d040"], [1, "#ee5a1c"]], "d")}
      ${this.grad("shadeUp", [[0, "#615f63"], [0.4, "#757277"], [1, "#8f8b91"]])}
      ${this.grad("wallL", [[0, "#98949a"], [0.5, "#8a878c"], [1, "#737075"]], "h")}
      ${this.grad("wallR", [[0, "#737075"], [0.3, "#858287"], [1, "#949097"]], "h")}
      ${this.grad("recess", [[0, "#4a3a5e"], [1, "#5b4671"]], "h")}
      ${this.grad("post", [[0, "#493a60"], [0.4, "#5d4878"], [1, "#6b5288"]])}
      ${this.grad("postSide", [[0, "#4d3c66"], [0.5, "#413155"], [1, "#3b2c4e"]])}
      ${this.grad("postSide2", [[0, "#3b2c4e"], [0.5, "#3f3054"], [1, "#57426e"]])}
      ${this.grad("bar", [[0, "#53406c"], [1, "#684e84"]], "h")}
      ${this.grad("wine", [[0, "#6f2b45"], [0.7, "#6c2a42"], [1, "#5a2338"]], "h")}
      ${this.grad("beam", [[0, "#4a355e"], [1, "#3f2f54"]], "h")}
      ${this.grad("footL", [[0, "#46375a"], [0.4, "#5b4673"], [0.7, "#6f5487"]])}
      ${this.grad("footR", [[0, "#4c3b60"], [0.4, "#5c466f"], [1, "#624b78"]])}
      ${this.grad("gapShade", [[0, "#3e304e"], [1, "#5c4672"]], "h")}
    </defs></svg>`;
  }

  render() {
    return html`${this.defs()}
      <header class="title">
        <div class="lights"><span class="light red"></span><span class="light amber"></span><span class="light green"></span></div>
        <div class="modes">
          <button aria-label="Toggle sidebar"><svg class="panel" viewBox="0 0 24 24"><rect x="1" y="1" width="22" height="22" fill="#fff" stroke="#3f6fbf" stroke-width="2"/><rect x="0" y="0" width="8" height="24" fill="#3f6fbf"/></svg></button>
          <div class="mode-list">${MODES.map((m) => html`<button class=${classMap({ mode: true, on: m === this.mode })} @click=${() => (this.mode = m)}>${m}</button>`)}</div>
          <div class="filters">
            <svg viewBox="0 0 28 28" fill="none" stroke="#777" stroke-width="1.500"><ellipse cx="14" cy="5" rx="10" ry="3"/><path d="M4 6L12 16V25H16V16L24 6M23 1H27V5M1 22V26H5"/></svg>
            <svg viewBox="0 0 28 28" fill="none" stroke="#999" stroke-width="1.500"><circle cx="14" cy="14" r="11"/><path d="M14 14H28" stroke="#666"/><rect x="11" y="11" width="6" height="6" fill="#666" stroke="none"/></svg>
            <svg viewBox="0 0 28 28" fill="none" stroke="#777" stroke-width="1.500"><circle cx="14" cy="14" r="12"/><circle cx="14" cy="14" r="6"/></svg>
            <span class="block"></span>
          </div>
        </div>
      </header>
      <nav class="tabs">${TABS.map((t) => html`<button class=${classMap({ tab: true, on: t === this.tab })} @click=${() => (this.tab = t)}>${t}</button>`)}</nav>
      <div class="bar">${TOP_TOOLS.map((t) => this.tool(t))}</div>
      <div class="body">
        <aside class="side">
          <div class="side-top"></div>
          <input class="command" type="text" placeholder="Command" aria-label="Command">
          <div class="palette">${SIDE_TOOLS.map((t) => this.tool(t))}</div>
          <form class="snaps">
            <label class="row"><input class="radio" type="radio" name="snap" checked>Persistent</label>
            <label class="row"><input class="radio" type="radio" name="snap">One shot</label>
            <div class="list">${SNAPS.map(([name, on, off]) => html`<label class=${classMap({ row: true, off: !!off })}><input class="check" type="checkbox" ?checked=${on} ?disabled=${!!off}>${name}</label>`)}</div>
            <label class="row last"><input class="check" type="checkbox">Disable all</label>
          </form>
        </aside>
        <section class="main">
          <nav class="views">
            <svg viewBox="0 0 20 20" fill="none" stroke="#777" stroke-width="1.500"><path d="M1 9V2H8V9ZM11 9V2H18V9ZM1 18V11H8V18ZM11 18V11H18V18Z" stroke-dasharray="5 1"/></svg>
            <svg viewBox="0 0 20 20" fill="none" stroke="#7fa8e4" stroke-width="1.500"><rect x="1" y="2" width="17" height="16"/><path d="M1 2H7" stroke="#3f6fbf" stroke-width="2.500"/></svg>
            ${VIEWS.map((v) => html`<button class=${classMap({ view: true, on: v === this.view })} @click=${() => (this.view = v)}>${v}</button>`)}
          </nav>
          <div class="canvas">
            <svg class="scene" viewBox="163 247 1184 1050">
              <g transform="translate(420 310) scale(.3954 .3333)">${UPPER.map(face)}<g class="edges">${UPPER_EDGES.map(edge)}</g>${UPPER_SCREWS.map(screw)}</g>
              <g transform="translate(560 760) scale(.3333)">${LOWER.map(face)}<g class="edges">${LOWER_EDGES.map(edge)}</g>${LOWER_SCREWS.map(screw)}</g>
            </svg>
            <span class="badge">Parallel</span>
          </div>
        </section>
      </div>
      <footer class="status">
        <svg viewBox="0 0 16 16" stroke="#888" stroke-width="1.500"><path d="M0 3H2M4 3H16M0 8H2M4 8H16M0 13H2M4 13H16"/></svg>
        <span>Choose world view ( Top Bottom Left Right Front Back Perspective TwoPointPerspective )_Top</span>
      </footer>`;
  }
}

const MATERIALS: [string, string][] = [["Total", "#000000"], ["Glass", "#00a19a"], ["Plastic", "#b8dfec"], ["Metal", "#8394a6"], ["Mineral", "#fccbd5"], ["Organic", "#fbaf17"], ["Timber", "#a6d89a"]];

interface Ring { size: number; r: number; step: number; total: string; plastic?: number; metal?: number; mineral?: number; timber?: number; font: number; }

/* Arc that runs counter-clockwise from twelve o'clock. */
const arc = (c: number, r: number, pct: number | undefined, color: string) => {
  if (!pct) return nothing;
  if (pct > 99) return svg`<circle cx=${c} cy=${c} r=${r} fill="none" stroke=${color} stroke-width="4"/>`;
  const a = (pct / 100) * Math.PI * 2;
  const x = c - r * Math.sin(a);
  const y = c - r * Math.cos(a);
  return svg`<path d="M${c} ${c - r}A${r} ${r} 0 ${pct > 50 ? 1 : 0} 0 ${x} ${y}" fill="none" stroke=${color} stroke-width="4"/>`;
};

@customElement("circularity-report")
class CircularityReport extends LitElement {
  @property() label = "Top";

  static styles = css`
    :host { display: block; position: relative; box-sizing: border-box; border: 2px solid #939393; background: #fff; color: #231f20; font-family: ${SANS}; padding: 33px 0 20px 69px; margin: 1px; margin-left: 0; min-width: 0; }
    h1, h2, h3, p, dl, dd { margin: 0; }
    .badge { position: absolute; left: 2px; top: 1px; background: #02539a; color: #fff; font: bold 18px/31px ${SANS}; padding: 0 6px; }
    .head { display: flex; justify-content: space-between; align-items: flex-start; height: 91px; padding-right: 63px; }
    h1 { font-size: 34px; line-height: 40px; white-space: nowrap; }
    .sub { font-size: 17px; line-height: 24px; margin-top: 4px; white-space: nowrap; }
    .logo { width: 208px; height: 72px; display: block; flex: none; }
    .meta { display: grid; grid-template-columns: 128px 1fr; font-size: 17px; line-height: 24px; margin-bottom: 62px; }
    h2 { font-size: 25px; line-height: 32px; margin-bottom: 6px; }
    h2.light { font-weight: normal; }
    .split { display: grid; grid-template-columns: 766px 1fr; }
    .first { margin-bottom: 60px; }
    .second { margin-bottom: 84px; }
    .pair { display: flex; align-items: center; }
    table { border-collapse: collapse; table-layout: fixed; width: 351px; height: 197px; margin-left: -4px; font-size: 17px; line-height: 20px; flex: none; }
    th, td { padding: 0; text-align: left; font-weight: normal; white-space: nowrap; }
    .c1 { width: 132px; }
    .c2 { width: 129px; }
    .plain { width: 347px; height: 221px; margin-left: 0; }
    .plain .c1 { width: 128px; }
    .bullet { display: inline-block; width: 5px; height: 5px; margin: 0 10px 4px 1px; }
    .ring { display: block; flex: none; overflow: visible; }
    .wide-gap { margin-left: 88px; }
    .mid-gap { margin-left: 89px; }
    .layers { display: grid; grid-template-columns: repeat(3, 386px); row-gap: 69px; margin-top: 20px; }
    h3 { font-size: 21px; line-height: 28px; font-weight: normal; }
    .small table { width: 192px; height: 157px; font-size: 13px; line-height: 16px; }
    .small .c1 { width: 68px; }
    .small .c2 { width: 64px; }
    .small .bullet { margin-bottom: 3px; }
    .small .ring { margin-top: 11px; }
  `;

  private table(mass: string[], ci: string[]) {
    return html`<table>
      <tr><th class="c1"></th><th class="c2">Mass (kg)</th><th>CI (%)</th></tr>
      ${MATERIALS.map(([name, color], i) => html`<tr><th><span class="bullet" style="background:${color}"></span>${name}:</th><td>${mass[i]}</td><td>${ci[i]}</td></tr>`)}
    </table>`;
  }

  private ring(o: Ring, cls = "") {
    const c = o.size / 2;
    const x = c - (o.total === "0%" ? 27 : o.total === "100%" ? 40 : 41);
    return html`<svg class="ring ${cls}" width=${o.size} height=${o.size} viewBox="0 0 ${o.size} ${o.size}">
      ${arc(c, o.r, o.plastic, "#b8dfec")}
      ${arc(c, o.r - o.step, o.metal, "#8394a6")}
      ${arc(c, o.r - o.step * 2, o.mineral, "#fccbd5")}
      ${arc(c, o.r - o.step * 4, o.timber, "#a6d89a")}
      <text x=${x} y=${c + Math.round(o.font * 0.36)} font-size=${o.font} fill="#1a1a1a">${o.total}</text>
    </svg>`;
  }

  private layer(name: string, mass: string[], ci: string[], ring: Partial<Ring> & { total: string }) {
    return html`<section><h3>${name}</h3><div class="pair">${this.table(mass, ci)}${this.ring({ size: 150, r: 64, step: 9, font: 30, ...ring })}</div></section>`;
  }

  render() {
    const zero = Array(7).fill("0");
    const paths = [["Reused", "10.2", "39.3"], ["Recycled", "4.7", "18.1"], ["Renewable", "2.8", "10.9"], ["Virgin", "8.2", "31.7"], ["Reusable", "25.9", "100"], ["Recyclable", "0", "0"], ["Biodegradable", "0", "0"], ["Landfill", "0", "0"]];
    return html`
      <span class="badge">${this.label}</span>
      <header class="head">
        <div><h1>Material and Building Circularity Report</h1>
          <p class="sub">Created using RhinoCircular V1.1, an application by the Circular Construction Lab of Cornell University.</p></div>
        <svg class="logo" viewBox="2286 36 208 72">
          <defs><linearGradient id="globe" x1="0" y1="0" x2="1" y2="1"><stop offset="0" stop-color="#0aa2b8"/><stop offset=".6" stop-color="#0598b0"/><stop offset="1" stop-color="#45c4d4"/></linearGradient></defs>
          <circle cx="2324" cy="71" r="30" fill="url(#globe)"/>
          <path d="M2302 74Q2298 56 2310 49Q2317 45 2323 48Q2328 46 2330 51Q2332 54 2327 55Q2329 60 2323 61Q2322 55 2319 57Q2313 64 2308 68Q2312 72 2306 73Q2303 72 2302 74Z" fill="#fff"/>
          <path d="M2296 80Q2302 92 2311 93Q2320 94 2328 88Q2332 84 2333 89L2341 90Q2336 98 2325 99Q2306 100 2296 80Z" fill="#fff"/>
          <path d="M2293 83Q2304 103 2325 102" fill="none" stroke="#0aa2b8" stroke-width="1.500"/>
          <text x="2357" y="68" font-size="26" font-weight="bold" fill="#000">Rhino</text>
          <text x="2357" y="93" font-size="26" font-style="italic" fill="#000">CIRCULAR</text>
        </svg>
      </header>
      <dl class="meta"><dt>Assembly:</dt><dd>Assembly</dd><dt>Location</dt><dd>United States</dd><dt>Date</dt><dd>07/14/2023</dd></dl>
      <div class="split first">
        <section><h2>CI Total Building</h2><div class="pair">
          ${this.table(["26", "0", "7", "4", "2.1", "0", "13.1"], ["82.1", "0", "50", "89.6", "69.2", "0", "99.6"])}
          ${this.ring({ size: 196, r: 98, step: 12, total: "82.1%", plastic: 50, metal: 89.6, mineral: 69.2, timber: 99.6, font: 38 }, "wide-gap")}
        </div></section>
        <section><h2 class="light">Pathways</h2>
          <table class="plain"><tr><th class="c1"></th><th class="c2">Mass (kg)</th><th>CI (%)</th></tr>
            ${paths.map(([n, m, c]) => html`<tr><th>${n}:</th><td>${m}</td><td>${c}</td></tr>`)}</table>
        </section>
      </div>
      <div class="split second">
        <section><h2>CI Production</h2><div class="pair">
          ${this.table(["18", "0", "0", "3", "1", "0", "13"], ["68.3", "0", "0", "93", "63", "0", "99.1"])}
          ${this.ring({ size: 138, r: 67, step: 9, total: "68.3%", metal: 93, mineral: 63, timber: 99.1, font: 30 })}
          ${this.ring({ size: 138, r: 67, step: 9, total: "100%", plastic: 100, metal: 100, mineral: 100, timber: 100, font: 30 }, "mid-gap")}
        </div></section>
        <section><h2 class="light">CI End of Use</h2>${this.table(["26", "0", "7", "4", "2", "0", "13"], ["100", "0", "100", "100", "100", "0", "100"])}</section>
      </div>
      <h2>Shearing Layers</h2>
      <div class="layers small">
        ${this.layer("CI Skin", ["13.8", "0", "7.1", "0", "2.1", "0", "4.7"], ["69.4", "0", "50", "0", "69.2", "0", "98.8"], { total: "69.4%", plastic: 50, mineral: 69.2, timber: 98.8 })}
        ${this.layer("CI Structure", ["12", "0", "0", "3.6", "0", "0", "8.4"], ["96.7", "0", "0", "89.6", "0", "0", "100"], { total: "96.7%", metal: 89.6, timber: 100 })}
        ${["CI Service", "CI Spaceplan", "CI Stuff", "CI Unknown"].map((n) => this.layer(n, zero, zero, { total: "0%" }))}
      </div>`;
  }
}

@customElement("app-root")
class AppRoot extends LitElement {
  static styles = css`
    :host { display: grid; grid-template-columns: 1347fr 1213fr; min-height: 100vh; background: #fff; }
    .win { margin: 86px 0 88px 1px; }
  `;
  render() {
    return html`<rhino-window class="win"></rhino-window><circularity-report></circularity-report>`;
  }
}
